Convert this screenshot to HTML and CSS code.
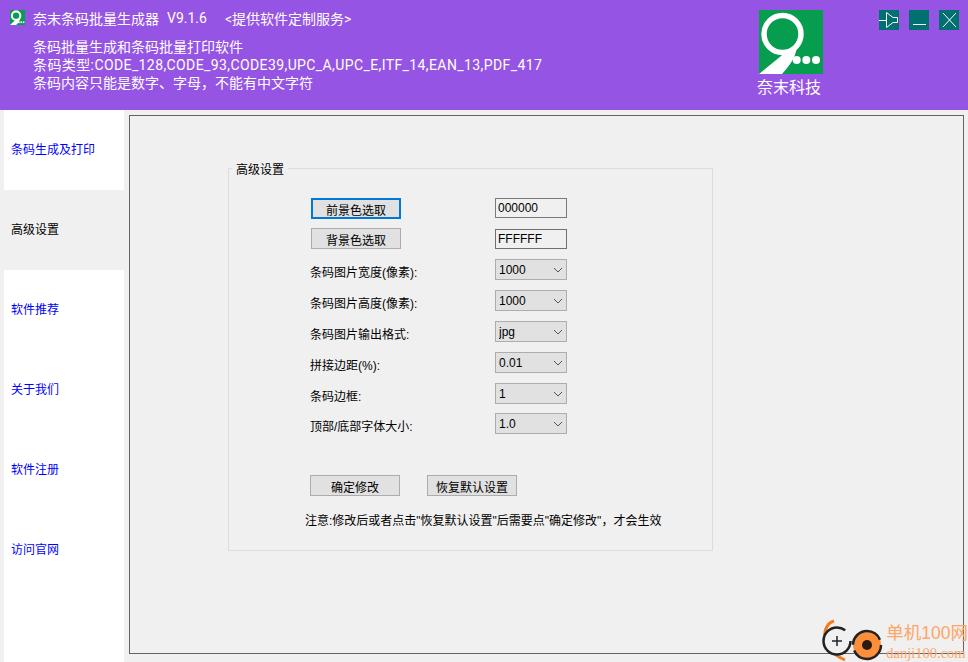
FILE: index.html
```html
<!DOCTYPE html>
<html lang="zh-CN">
<head>
    <meta charset="UTF-8">
    <title>奈末条码批量生成器</title>
    <link rel="stylesheet" href="styles.css">
</head>
<body>

    <header class="top">
        <div class="top-info">
            <div class="title-row">
                <svg class="small-logo" viewBox="0 0 64 64">
                    <rect width="64" height="64" fill="#069d4f"/>
                    <circle cx="26" cy="24" r="18" fill="none" stroke="#fff" stroke-width="9"/>
                    <path d="M0 64 L24 42 L44 36 C40 48 34 56 26 64 Z" fill="#fff"/>
                    <circle cx="38" cy="52" r="4" fill="#fff"/>
                    <circle cx="48" cy="52" r="4" fill="#fff"/>
                    <circle cx="58" cy="52" r="4" fill="#fff"/>
                </svg>
                <span>奈末条码批量生成器</span>
                <span class="title-version">V9.1.6</span>
                <span class="title-note">&lt;提供软件定制服务&gt;</span>
            </div>
            <p>条码批量生成和条码批量打印软件</p>
            <p class="types">条码类型:CODE_128,CODE_93,CODE39,UPC_A,UPC_E,ITF_14,EAN_13,PDF_417</p>
            <p>条码内容只能是数字、字母，不能有中文字符</p>
        </div>

        <div class="brand">
            <svg class="brand-logo" viewBox="0 0 64 64">
                <rect width="64" height="64" fill="#069d4f"/>
                <circle cx="23.5" cy="24" r="18.5" fill="none" stroke="#fff" stroke-width="5.5"/>
                <path d="M0 64 L22 46 L26 42 L38 36 C37 48 30 56 23 64 Z" fill="#fff"/>
                <circle cx="37.7" cy="50" r="4" fill="#fff"/>
                <circle cx="47.3" cy="50" r="4" fill="#fff"/>
                <circle cx="57" cy="50" r="4" fill="#fff"/>
            </svg>
            <span class="brand-name">奈末科技</span>
        </div>

        <div class="win-buttons">
            <a href="#" class="win-btn">
                <svg viewBox="0 0 20 20"><path d="M0 10.5H7M7.5 2.5V17.5M7.5 2.5L14 7.5H18.5V12.5H14L7.5 17.5" fill="none" stroke="#fff"/></svg>
            </a>
            <a href="#" class="win-btn">
                <svg viewBox="0 0 20 20"><path d="M4 14.5H17" fill="none" stroke="#fff"/></svg>
            </a>
            <a href="#" class="win-btn">
                <svg viewBox="0 0 20 20"><path d="M4 3L17 17M17 3L4 17" fill="none" stroke="#fff"/></svg>
            </a>
        </div>
    </header>

    <div class="main">
        <nav class="side">
            <a href="#">条码生成及打印</a>
            <a href="#" class="active">高级设置</a>
            <a href="#">软件推荐</a>
            <a href="#">关于我们</a>
            <a href="#">软件注册</a>
            <a href="#">访问官网</a>
        </nav>

        <section class="panel">
            <fieldset class="group">
                <legend>高级设置</legend>

                <div class="row">
                    <button type="button" class="btn btn-focus">前景色选取</button>
                    <input type="text" class="color-input up" value="000000">
                </div>
                <div class="row tight">
                    <button type="button" class="btn">背景色选取</button>
                    <input type="text" class="color-input dark" value="FFFFFF">
                </div>

                <div class="row">
                    <label>条码图片宽度(像素):</label>
                    <div class="select-box">
                        <select><option>1000</option></select>
                        <svg viewBox="0 0 10 6"><path d="M1 1L5 5L9 1" fill="none" stroke="#555"/></svg>
                    </div>
                </div>
                <div class="row">
                    <label>条码图片高度(像素):</label>
                    <div class="select-box">
                        <select><option>1000</option></select>
                        <svg viewBox="0 0 10 6"><path d="M1 1L5 5L9 1" fill="none" stroke="#555"/></svg>
                    </div>
                </div>
                <div class="row">
                    <label>条码图片输出格式:</label>
                    <div class="select-box">
                        <select><option>jpg</option></select>
                        <svg viewBox="0 0 10 6"><path d="M1 1L5 5L9 1" fill="none" stroke="#555"/></svg>
                    </div>
                </div>
                <div class="row">
                    <label>拼接边距(%):</label>
                    <div class="select-box">
                        <select><option>0.01</option></select>
                        <svg viewBox="0 0 10 6"><path d="M1 1L5 5L9 1" fill="none" stroke="#555"/></svg>
                    </div>
                </div>
                <div class="row">
                    <label>条码边框:</label>
                    <div class="select-box">
                        <select><option>1</option></select>
                        <svg viewBox="0 0 10 6"><path d="M1 1L5 5L9 1" fill="none" stroke="#555"/></svg>
                    </div>
                </div>
                <div class="row tight">
                    <label>顶部/底部字体大小:</label>
                    <div class="select-box">
                        <select><option>1.0</option></select>
                        <svg viewBox="0 0 10 6"><path d="M1 1L5 5L9 1" fill="none" stroke="#555"/></svg>
                    </div>
                </div>

                <div class="actions">
                    <button type="button" class="btn">确定修改</button>
                    <button type="button" class="btn">恢复默认设置</button>
                </div>

                <p class="note">注意:修改后或者点击"恢复默认设置"后需要点"确定修改"，才会生效</p>
            </fieldset>
        </section>
    </div>

    <div class="watermark">
        <svg class="mark-icon" viewBox="0 0 64 44">
            <path d="M14 3C2 6 -2 30 25 42" fill="none" stroke="#f47b20" stroke-width="3"/>
            <circle cx="17" cy="23" r="13.5" fill="#f0f0f0" stroke="#222" stroke-width="2.5" stroke-dasharray="72 13"/>
            <path d="M12 23H22M17 18V28" stroke="#222" stroke-width="1.5"/>
            <circle cx="47" cy="27" r="14" fill="#fd8f3c" stroke="#222" stroke-width="2.5" stroke-dasharray="38 6"/>
            <circle cx="47" cy="27" r="5" fill="#2a1a10"/>
        </svg>
        <div class="mark-text">
            <span class="mark-cn">单机100网</span>
            <span class="mark-en">danji100.com</span>
        </div>
    </div>

</body>
</html>
```

FILE: styles.css
```css
* {
    box-sizing: border-box;
}

html, body {
    height: 100%;
}

body {
    margin: 0;
    position: relative;
    overflow: hidden;
    display: flex;
    flex-direction: column;
    background: #f0f0f0;
    color: #000;
    font-family: "Liberation Sans", "Noto Sans CJK SC", sans-serif;
    font-size: 12px;
}

/* top bar */
.top {
    flex: none;
    height: 110px;
    display: flex;
    background: #9654e5;
    color: #fff;
    font-family: Roboto, "Noto Sans CJK SC", sans-serif;
    font-size: 14px;
}

.top-info {
    width: 759px;
    padding: 8px 0 0 10px;
}

.top-info p {
    margin: 0 0 0 23px;
    line-height: 18px;
}

.top-info .types {
    letter-spacing: 0.4px;
}

.title-row {
    display: flex;
    align-items: center;
    height: 19px;
    margin-bottom: 11px;
}

.small-logo {
    width: 15px;
    height: 15px;
    margin-right: 8px;
}

.title-version {
    margin-left: 8px;
}

.title-note {
    margin-left: 18px;
}

.brand {
    width: 64px;
    padding-top: 10px;
    display: flex;
    flex-direction: column;
    font-size: 16px;
    line-height: 28px;
}

.brand-logo {
    width: 64px;
    height: 64px;
}

.brand-name {
    margin-left: -2px;
    white-space: nowrap;
}

.win-buttons {
    display: flex;
    gap: 10px;
    padding: 10px 0 0 56px;
}

.win-btn {
    display: block;
    width: 20px;
    height: 20px;
    background: #007070;
}

.win-btn svg {
    display: block;
}

/* left tabs + panel */
.main {
    flex: 1;
    display: flex;
    padding-left: 4px;
    min-height: 0;
}

.side {
    width: 120px;
    background: #fff;
}

.side a {
    display: flex;
    align-items: center;
    height: 80px;
    padding: 0 0 4px 7px;
    color: #0000ff;
    text-decoration: none;
}

.side a.active {
    background: #f0f0f0;
    color: #000;
}

.panel {
    width: 835px;
    height: 539px;
    margin: 5px 0 0 5px;
    padding: 44px 0 0 98px;
    border: 1px solid #646464;
}

.group {
    width: 485px;
    height: 391px;
    margin: 0;
    padding: 21px 0 0 81px;
    border: 1px solid #dcdcdc;
}

.group legend {
    position: relative;
    top: 2px;
    margin-left: -78px;
    padding: 0 4px;
    line-height: 17px;
}

.row {
    display: flex;
    align-items: center;
    justify-content: space-between;
    width: 257px;
    height: 21px;
    margin-bottom: 10px;
}

.row.tight {
    margin-top: -1px;
}

.row label {
    position: relative;
    top: 2px;
}

.btn {
    width: 90px;
    height: 21px;
    padding: 1px 0 0;
    margin-left: 1px;
    border: 1px solid #adadad;
    background: #e1e1e1;
    color: #000;
    font: inherit;
}

.btn-focus {
    border: 2px solid #0078d7;
}

.color-input {
    width: 72px;
    height: 20px;
    padding: 0 2px;
    border: 1px solid #7a7a7a;
    background: #f0f0f0;
    font: inherit;
    color: #000;
}

.color-input.up {
    margin-top: -2px;
}

.color-input.dark {
    border-color: #707070;
}

.select-box {
    position: relative;
    width: 72px;
    height: 21px;
}

.select-box select {
    display: block;
    width: 100%;
    height: 100%;
    padding: 1px 0 0 3px;
    appearance: none;
    border: 1px solid #adadad;
    border-radius: 0;
    background: #e1e1e1;
    color: #000;
    font: inherit;
}

.select-box svg {
    position: absolute;
    top: 8px;
    right: 4px;
    width: 10px;
    height: 6px;
}

.actions {
    display: flex;
    gap: 27px;
    margin-top: 41px;
}

.actions .btn {
    margin-left: 0;
}

.note {
    margin: 15px 0 0 -5px;
    line-height: 20px;
    white-space: nowrap;
}

/* corner mark */
.watermark {
    position: absolute;
    right: 0;
    bottom: 0;
    display: flex;
    align-items: flex-end;
}

.mark-icon {
    width: 64px;
    height: 44px;
}

.mark-text {
    display: flex;
    flex-direction: column;
    margin-left: 2px;
    color: #fda668;
    white-space: nowrap;
}

.mark-cn {
    font-size: 17.5px;
    line-height: 21px;
}

.mark-en {
    font-family: "Liberation Serif", serif;
    font-size: 14.5px;
    line-height: 18px;
}
```
